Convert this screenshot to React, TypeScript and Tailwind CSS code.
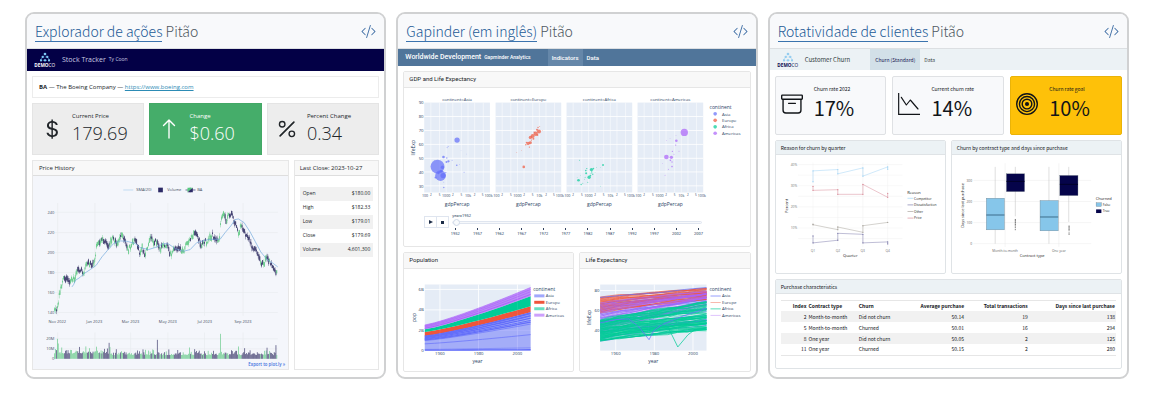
import { useState, type ReactNode } from "react";
import { BsArchive, BsArrowUp, BsBullseye, BsCodeSlash, BsCurrencyDollar, BsPercent } from "react-icons/bs";

type Point = [number, number];

function createRandom(seed: number) {
  let s = seed;
  return () => {
    s = (s * 16807) % 2147483647;
    return s / 2147483647;
  };
}

function sample(points: Point[], x: number) {
  for (let i = 1; i < points.length; i++) {
    const [x0, y0] = points[i - 1];
    const [x1, y1] = points[i];
    if (x <= x1) return y0 + ((y1 - y0) * (x - x0)) / (x1 - x0);
  }
  return points[points.length - 1][1];
}

const toPoints = (points: Point[]) => points.map((p) => p.join(",")).join(" ");

/* ---------- Shared pieces ---------- */

function ShowcaseCard({ title, children }: { title: string; children: ReactNode }) {
  return (
    <article className="flex min-w-0 flex-col overflow-hidden rounded-[9px] border-2 border-[#d0d1d2] bg-white">
      <header className="flex h-[35px] items-center justify-between border-b border-[#dcdfe2] bg-[#f8f9fb] px-2 font-['Noto_Sans_CJK_SC',sans-serif]">
        <h2 className="text-[14px] leading-[16px] font-light whitespace-nowrap text-[#4d5761]">
          <a href="#" className="border-b border-[#3b73ae] text-[#235a96]">
            {title}
          </a>{" "}
          Pitão
        </h2>
        <a href="#" aria-label={`Código: ${title}`} className="text-[#3f6ea5]">
          <BsCodeSlash className="size-[15px]" />
        </a>
      </header>
      {children}
    </article>
  );
}

function DemoLogo({ dark }: { dark?: boolean }) {
  return (
    <svg viewBox="0 0 66 48" className="h-4 w-[22px] shrink-0" aria-label="DEMOCO">
      <g stroke={dark ? "#5aa9dc" : "#a8d4ee"} strokeWidth="2" fill="none">
        <path d="M33 6 18 25M33 6 48 25M26 15H40M18 25H48" strokeDasharray="5 3" />
      </g>
      <g fill={dark ? "#7cc6f2" : "#94cdf0"}>
        <circle cx="33" cy="6" r="4" />
        <circle cx="26" cy="15" r="3.5" />
        <circle cx="40" cy="15" r="3.5" />
        <rect x="18" y="22" width="6" height="6" />
        <rect x="30" y="22" width="6" height="6" />
        <rect x="42" y="22" width="6" height="6" />
      </g>
      <text x="1" y="45" fontSize="14" fontFamily="Open Sans, sans-serif" fill={dark ? "#ffffff" : "#0a0a4f"}>
        <tspan fontWeight="700">DEMO</tspan>
        <tspan fontWeight="400">CO</tspan>
      </text>
    </svg>
  );
}

/* ---------- Stock tracker ---------- */

const PRICE: Point[] = [
  [103, 468], [112, 460], [116, 420], [124, 395], [130, 362], [140, 372], [148, 378], [156, 370], [162, 375],
  [170, 350], [180, 345], [190, 350], [200, 325], [208, 328], [215, 325], [222, 328], [230, 265], [240, 255],
  [250, 255], [258, 268], [265, 275], [272, 260], [280, 248], [288, 265], [295, 255], [305, 240], [315, 262],
  [325, 288], [335, 260], [345, 255], [352, 268], [358, 300], [366, 275], [373, 300], [380, 280], [390, 248],
  [400, 258], [410, 262], [418, 285], [428, 270], [440, 268], [450, 300], [460, 285], [470, 278], [480, 285],
  [492, 285], [500, 265], [510, 250], [518, 240], [526, 228], [535, 250], [542, 275], [552, 262], [560, 258],
  [570, 245], [578, 240], [590, 258], [598, 250], [604, 185], [612, 180], [620, 200], [628, 175], [636, 180],
  [643, 200], [650, 215], [656, 240], [663, 205], [672, 225], [682, 245], [692, 265], [702, 280], [710, 295],
  [720, 318], [730, 330], [740, 305], [750, 320], [760, 345], [768, 352], [773, 346],
];

const AVERAGE: Point[] = [
  [155, 395], [160, 388], [166, 375], [180, 366], [190, 356], [210, 343], [228, 330], [245, 305], [262, 285],
  [280, 265], [300, 257], [320, 258], [345, 265], [360, 277], [385, 283], [410, 275], [430, 265], [445, 266],
  [465, 280], [490, 288], [510, 283], [530, 262], [550, 256], [570, 252], [600, 252], [615, 232], [632, 212],
  [645, 193], [655, 191], [672, 202], [690, 230], [705, 258], [722, 290], [740, 312], [760, 325], [773, 335],
];

const SPIKES: Record<number, number> = { 3: 60, 4: 46, 8: 34, 61: 48, 115: 57, 151: 34, 186: 75, 206: 37, 248: 41 };

function StockChart() {
  const random = createRandom(77);
  const days = Array.from({ length: 250 }, (_, i) => {
    const x = 103 + i * 2.68;
    const mid = sample(PRICE, x);
    const slope = sample(PRICE, x + 3) - sample(PRICE, x - 3);
    const up = slope + (random() - 0.5) * 26 < 0;
    return {
      x,
      up,
      mid: mid + (random() - 0.5) * 14,
      body: 5 + random() * 11,
      wick: 9 + random() * 17,
      volume: SPIKES[i] ?? 11 + random() * random() * 25 + (i < 60 ? 5 : 0),
    };
  });
  return (
    <svg viewBox="38 62 765 574" className="block h-auto w-full" fontFamily="Open Sans, sans-serif" aria-label="Price history">
      <g stroke="#e8ebef" strokeWidth="2">
        {[112, 224, 331, 443, 553, 669].map((x) => (
          <path key={x} d={`M${x} 143V482M${x} 532V611`} />
        ))}
        {[171, 232, 292, 352, 412, 472, 551, 581].map((y) => (
          <path key={y} d={`M103 ${y}H773`} />
        ))}
      </g>
      <path d="M309 104H339" stroke="#a9cfee" strokeWidth="2" />
      <rect x="414" y="97" width="14" height="14" fill="#2c2a66" />
      <path d="M496 104H526M510 97V111" stroke="#2c2a66" strokeWidth="2" />
      <path d="M502 97H518L502 111Z" fill="#55c97f" />
      <path d="M518 97V111H502Z" fill="#2c2a66" />
      <g fontSize="12" fill="#444f5f">
        <text x="348" y="108">SMA(20)</text>
        <text x="441" y="108">Volume</text>
        <text x="531" y="108">BA</text>
        {[240, 220, 200, 180, 160, 140].map((v, i) => (
          <text key={v} x="102" y={176 + i * 60} textAnchor="end">
            {v}
          </text>
        ))}
        <text x="102" y="556" textAnchor="end">20M</text>
        <text x="102" y="585" textAnchor="end">10M</text>
        <text x="102" y="615" textAnchor="end">0</text>
        {["Nov 2022", "Jan 2023", "Mar 2023", "May 2023", "Jul 2023", "Sep 2023"].map((m, i) => (
          <text key={m} x={[111, 222, 331, 443, 554, 669][i]} y="505" textAnchor="middle">
            {m}
          </text>
        ))}
      </g>
      {days.map((d, i) => (
        <g key={i} fill={d.up ? "#4cc274" : "#1b1852"}>
          <rect x={d.x - 0.5} y={d.mid - d.wick / 2} width="1" height={d.wick} />
          <rect x={d.x - 1} y={d.mid - d.body / 2} width="2" height={d.body} />
          <rect x={d.x - 1} y={611 - d.volume} width="2" height={d.volume} opacity="0.85" />
        </g>
      ))}
      <polyline points={toPoints(AVERAGE)} fill="none" stroke="#6fa8dc" strokeWidth="2" />
      <a href="#">
        <text x="795" y="632" fontSize="13" fontWeight="600" textAnchor="end" fill="#3b6fe0">
          Export to plot.ly »
        </text>
      </a>
    </svg>
  );
}

function ValueBox({ icon, label, value, green }: { icon: ReactNode; label: string; value: string; green?: boolean }) {
  return (
    <div
      className={
        green
          ? "grid grid-cols-[39px_1fr] border border-[#43a866] bg-[#45ad6a] text-white"
          : "grid grid-cols-[39px_1fr] border border-[#e4e4e4] bg-[#ededed] text-[#212529]"
      }
    >
      <div className="flex items-center pl-2">{icon}</div>
      <div className="pt-[7px]">
        <div className="text-[6px] leading-[10px]">{label}</div>
        <div className="text-[18px] leading-6 font-light">{value}</div>
      </div>
    </div>
  );
}

function StockTracker() {
  const rows = [
    ["Open", "$180.00"],
    ["High", "$182.33"],
    ["Low", "$179.01"],
    ["Close", "$179.69"],
    ["Volume", "4,601,300"],
  ];
  return (
    <div className="flex flex-1 flex-col font-['Open_Sans',sans-serif] text-[#212529]">
      <div className="flex h-[22px] items-center bg-[#030046] pl-[7px] text-[#c9cbe0]">
        <DemoLogo dark />
        <span className="ml-1.5 text-[7px]">Stock Tracker</span>
        <span className="ml-[3px] text-[5px]">Ty Coon</span>
      </div>
      <div className="flex flex-1 flex-col gap-[5px] px-[5px] pt-[5px] pb-[7px]">
        <p className="h-[22px] border border-[#ececec] px-1.5 text-[6px] leading-5 whitespace-nowrap">
          <b>BA</b> — The Boeing Company —{" "}
          <a href="#" className="text-[#2c8bb5] underline">
            https://www.boeing.com
          </a>
        </p>
        <div className="grid h-[52px] grid-cols-3 gap-[5px]">
          <ValueBox icon={<BsCurrencyDollar className="size-[22px]" />} label="Current Price" value="179.69" />
          <ValueBox icon={<BsArrowUp className="size-[22px]" />} label="Change" value="$0.60" green />
          <ValueBox icon={<BsPercent className="size-[22px]" />} label="Percent Change" value="0.34" />
        </div>
        <div className="grid flex-1 grid-cols-[3fr_1fr] gap-[5px]">
          <section className="border border-[#e7e7e7] bg-[#f4f6fb]">
            <h3 className="h-[15px] border-b border-[#dedede] bg-[#f8f8f8] px-1.5 text-[6px] leading-[14px]">Price History</h3>
            <StockChart />
          </section>
          <section className="border border-[#e7e7e7]">
            <h3 className="h-[15px] border-b border-[#dedede] bg-[#f8f8f8] px-[5px] text-[6px] leading-[14px] whitespace-nowrap">
              Last Close: 2023-10-27
            </h3>
            <div className="px-[5px] pt-[11px]">
              <table className="w-full text-[5px]">
                <tbody>
                  {rows.map(([name, value]) => (
                    <tr key={name} className="h-[14px] odd:bg-[#f1f1f1]">
                      <th scope="row" className="pl-[3px] text-left font-normal">
                        {name}
                      </th>
                      <td className="pr-[3px] text-right">{value}</td>
                    </tr>
                  ))}
                </tbody>
              </table>
            </div>
          </section>
        </div>
      </div>
    </div>
  );
}

/* ---------- Worldwide development ---------- */

const COLORS = { Asia: "#636efa", Europe: "#ef553b", Africa: "#00cc96", Americas: "#ab63fa" };
type Continent = keyof typeof COLORS;
const CONTINENTS = Object.keys(COLORS) as Continent[];
const PANEL_X = [85, 300, 514, 728];

const BUBBLES: Record<Continent, [number, number, number][]> = {
  Asia: [
    [125, 230, 21], [134, 257, 16], [184, 150, 8], [142, 257, 8], [140, 232, 5], [143, 201, 4], [157, 169, 1.5],
    [154, 173, 1.5], [152, 216, 3], [158, 214, 3.5], [169, 211, 1.5], [183, 226, 2.5], [191, 223, 1], [205, 247, 1.5],
    [144, 293, 2], [144, 277, 1], [153, 204, 2], [119, 263, 3], [115, 212, 1], [196, 181, 0.7], [212, 192, 0.7],
    [150, 248, 2], [136, 244, 4], [128, 250, 3],
  ],
  Europe: [
    [385, 231, 4], [405, 142, 5], [412, 138, 6], [421, 131, 6.5], [431, 124, 6], [398, 160, 5], [405, 158, 4.5],
    [391, 164, 2], [402, 171, 2], [428, 112, 2], [433, 109, 1.5], [442, 122, 1], [414, 146, 3], [425, 119, 3],
    [426, 135, 3], [364, 187, 1.2], [379, 181, 1], [393, 157, 2], [416, 126, 2], [408, 150, 2],
  ],
  Africa: [
    [550, 271, 4], [582, 262, 5], [589, 239, 5], [572, 242, 2.5], [573, 250, 3], [624, 225, 3], [595, 236, 2.5],
    [558, 284, 2], [563, 280, 1.5], [553, 211, 1.5], [605, 233, 1.2], [593, 253, 2], [586, 257, 2.5], [617, 289, 1],
    [575, 236, 2], [570, 262, 1.5], [578, 277, 1.5], [546, 262, 1], [600, 247, 1], [588, 250, 1.5], [617, 232, 1],
    [568, 268, 1.2], [590, 246, 2], [556, 256, 1],
  ],
  Americas: [
    [869, 127, 11], [815, 201, 7], [830, 202, 5], [845, 152, 4], [843, 165, 2], [832, 230, 2.5], [833, 184, 2],
    [853, 184, 1.5], [821, 238, 1.5], [811, 256, 1.5], [826, 146, 1], [815, 151, 1], [844, 136, 1], [827, 211, 2.5],
    [832, 216, 2], [803, 220, 1], [838, 193, 1.5],
  ],
};

function GdpChart() {
  return (
    <svg viewBox="24 -7 1041 366" className="block h-auto w-full" fontFamily="Open Sans, sans-serif" aria-label="GDP and life expectancy by continent">
      {CONTINENTS.map((name, i) => {
        const x = PANEL_X[i];
        return (
          <g key={name}>
            <rect x={x} y="37" width="198" height="271" fill="#e5ecf6" />
            <g stroke="#ffffff" strokeWidth="1.5">
              {[20, 46, 66, 86, 112, 132, 152, 178].map((d) => (
                <path key={d} d={`M${x + d} 37V308`} />
              ))}
              {[79, 121, 163, 205, 246, 288].map((y) => (
                <path key={y} d={`M${x} ${y}H${x + 198}`} strokeWidth="2.5" />
              ))}
            </g>
            <g fill={COLORS[name]} fillOpacity="0.7">
              {BUBBLES[name].map(([cx, cy, r], k) => (
                <circle key={k} cx={cx} cy={cy} r={r} />
              ))}
            </g>
            <g textAnchor="middle" fill="#2a3f5f">
              <text x={x + 99} y="33" fontSize="13">
                continent={name}
              </text>
              <text x={x + 99} y="349" fontSize="15">
                gdpPercap
              </text>
              <g fontSize="11">
                <text x={x - 7} y="322" textAnchor="start">100</text>
                <text x={x + 66} y="322">1000</text>
                <text x={x + 132} y="322">10k</text>
                <text x={x + 206} y="322" textAnchor="end">100k</text>
              </g>
              <g fontSize="9">
                {[20, 46, 86, 112, 152, 176].map((d, k) => (
                  <text key={d} x={x + d} y="319">
                    {k % 2 ? 5 : 2}
                  </text>
                ))}
              </g>
            </g>
          </g>
        );
      })}
      <g fontSize="13" fill="#2a3f5f" textAnchor="end">
        {[90, 80, 70, 60, 50, 40, 30].map((v, i) => (
          <text key={v} x="83" y={42 + i * 42}>
            {v}
          </text>
        ))}
      </g>
      <text transform="translate(58 173) rotate(-90)" fontSize="15" textAnchor="middle" fill="#2a3f5f">
        lifeExp
      </text>
      <text x="945" y="56" fontSize="15" fill="#2a3f5f">continent</text>
      {CONTINENTS.map((name, i) => (
        <g key={name}>
          <circle cx="962" cy={71 + i * 19.5} r="5.5" fill={COLORS[name]} fillOpacity="0.7" />
          <text x="983" y={76 + i * 19.5} fontSize="13" fill="#2a3f5f">
            {name}
          </text>
        </g>
      ))}
    </svg>
  );
}

function YearControls() {
  const [year, setYear] = useState(1952);
  const years = Array.from({ length: 12 }, (_, i) => 1952 + i * 5);
  return (
    <div className="flex h-[37px] pr-[48px] pl-5 text-[#2a3f5f]">
      <div className="mt-[7px] flex h-3">
        <button type="button" aria-label="Play" className="flex w-[13px] items-center justify-center border border-[#dfe5ef]">
          <svg viewBox="0 0 4 4" className="size-[4px]">
            <path d="M0 0 4 2 0 4Z" fill="#1c2c47" />
          </svg>
        </button>
        <button type="button" aria-label="Stop" className="-ml-px flex w-[13px] items-center justify-center border border-[#dfe5ef]">
          <svg viewBox="0 0 4 4" className="size-[3px]">
            <path d="M0 0H4V4H0Z" fill="#1c2c47" />
          </svg>
        </button>
      </div>
      <div className="ml-[3px] flex min-w-0 flex-1 flex-col">
        <label htmlFor="year" className="mt-[4px] h-[6px] text-[4px] leading-[6px]">
          year={year}
        </label>
        <input
          id="year"
          type="range"
          min={1952}
          max={2007}
          step={5}
          value={year}
          onChange={(e) => setYear(Number(e.target.value))}
          className="m-0 h-[7px] w-full appearance-none bg-transparent [&::-webkit-slider-runnable-track]:h-[3px] [&::-webkit-slider-runnable-track]:rounded-full [&::-webkit-slider-runnable-track]:border [&::-webkit-slider-runnable-track]:border-[#dfe5ef] [&::-webkit-slider-runnable-track]:bg-[#f6f8fb] [&::-webkit-slider-thumb]:-mt-[3px] [&::-webkit-slider-thumb]:size-[7px] [&::-webkit-slider-thumb]:appearance-none [&::-webkit-slider-thumb]:rounded-full [&::-webkit-slider-thumb]:border [&::-webkit-slider-thumb]:border-[#cfd9e8] [&::-webkit-slider-thumb]:bg-[#f8fafc]"
        />
        <div className="mt-[2px] flex justify-between px-[3px]">
          {years.map((y) => (
            <span key={y} className="flex w-0 flex-col items-center text-[4px] leading-[8px]">
              <i className="h-[2px] w-px shrink-0 bg-[#33435e]" />
              {y}
            </span>
          ))}
        </div>
      </div>
    </div>
  );
}

function curve(x0: number, x1: number, y0: number, y1: number, bend: number): Point[] {
  return Array.from({ length: 12 }, (_, i) => {
    const t = i / 11;
    return [x0 + (x1 - x0) * t, y0 + (y1 - y0) * Math.pow(t, bend)] as Point;
  });
}

function ContinentLegend({ x, thick, opacity }: { x: number; thick: boolean; opacity: number[] }) {
  return (
    <g fill="#2a3f5f">
      <text x={x} y="137" fontSize="15">continent</text>
      {CONTINENTS.map((name, i) => (
        <g key={name}>
          <rect
            x={x + 3}
            y={thick ? 148 + i * 19.5 : 151.5 + i * 19.5}
            width="31"
            height={thick ? 9 : 2.5}
            fill={COLORS[name]}
            opacity={opacity[i]}
          />
          <text x={x + 38} y={157 + i * 19.5} fontSize="13">
            {name}
          </text>
        </g>
      ))}
    </g>
  );
}

function PopulationChart() {
  const bands: [Continent, number, number, number, number, number][] = [
    ["Asia", 318, 318, 275, 202, 0.5],
    ["Europe", 275, 202, 262, 184, 1],
    ["Africa", 262, 184, 254, 154, 1],
    ["Americas", 254, 154, 241, 127, 0.7],
  ];
  const lines: [number, number, Continent, number][] = [
    [317, 316, "Asia", 4], [315, 310, "Asia", 1.5], [298, 270, "Asia", 2], [288, 238, "Asia", 2], [286, 232, "Asia", 4],
    [284, 227, "Asia", 3], [282, 220, "Asia", 4], [279, 213, "Asia", 5], [276, 205, "Asia", 6], [251, 148, "Americas", 3],
    [247, 140, "Americas", 2], [244, 133, "Americas", 2], [241, 127, "Americas", 2],
  ];
  return (
    <svg viewBox="24 71 513 306" className="block h-auto w-full" fontFamily="Open Sans, sans-serif" aria-label="Population">
      <rect x="87" y="118" width="321" height="200" fill="#e5ecf6" />
      <path d="M87 133H408M87 195H408M87 257H408M133 118V318M250 118V318M368 118V318" stroke="#fff" strokeWidth="2.5" />
      {bands.map(([name, b0, b1, t0, t1, opacity]) => (
        <polygon
          key={name}
          points={toPoints([...curve(87, 408, t0, t1, 1.18), ...curve(87, 408, b0, b1, 1.18).reverse()])}
          fill={COLORS[name]}
          fillOpacity={opacity}
        />
      ))}
      {lines.map(([y0, y1, name, width], i) => (
        <polyline key={i} points={toPoints(curve(87, 408, y0, y1, 1.18))} fill="none" stroke={COLORS[name]} strokeWidth={width} />
      ))}
      <path d="M133 118V318M250 118V318M368 118V318" stroke="#fff" strokeWidth="1.5" opacity="0.15" />
      <g fontSize="13" fill="#2a3f5f">
        {["6B", "4B", "2B", "0"].map((v, i) => (
          <text key={v} x="84" y={138 + i * 61.5} textAnchor="end">
            {v}
          </text>
        ))}
        {["1960", "1980", "2000"].map((v, i) => (
          <text key={v} x={133 + i * 117.5} y="331" textAnchor="middle">
            {v}
          </text>
        ))}
      </g>
      <g fontSize="15" fill="#2a3f5f" textAnchor="middle">
        <text x="247" y="356">year</text>
        <text transform="translate(59 218) rotate(-90)">pop</text>
      </g>
      <ContinentLegend x={416} thick opacity={[0.6, 1, 0.6, 0.6]} />
    </svg>
  );
}

function LifeChart() {
  const random = createRandom(4242);
  const specs: [Continent, number, number, number, number, number][] = [
    ["Asia", 28, 291, 175, 250, 130],
    ["Europe", 28, 205, 155, 162, 130],
    ["Americas", 24, 268, 172, 178, 138],
    ["Africa", 62, 290, 225, 258, 172],
  ];
  const lines = specs.flatMap(([name, count, low0, high0, low1, high1]) =>
    Array.from({ length: count }, (_, k) => {
      const t = (k + 0.5) / count;
      const t1 = Math.min(1, Math.max(0, t + (random() - 0.5) * 0.4));
      const base = curve(614, 936, low0 + (high0 - low0) * t, low1 + (high1 - low1) * t1, 0.85);
      const wobble = name === "Africa" ? 6 : 3;
      return { name, points: base.map(([x, y], i) => [x, i === 0 ? y : y + (random() - 0.5) * wobble] as Point) };
    }),
  );
  return (
    <svg viewBox="553 71 512 306" className="block h-auto w-full" fontFamily="Open Sans, sans-serif" aria-label="Life expectancy">
      <rect x="614" y="118" width="322" height="200" fill="#e5ecf6" />
      <path d="M614 136H936M614 197H936M614 258H936M661 118V318M778 118V318M895 118V318" stroke="#fff" strokeWidth="2.5" />
      <g fill="none" strokeWidth="2.2">
        {lines.map(({ name, points }, i) => (
          <polyline key={i} points={toPoints(points)} stroke={COLORS[name]} strokeOpacity="0.9" />
        ))}
        <polyline points="614,234 661,224 700,222 731,246 762,285 776,258 800,240 860,215 936,190" stroke={COLORS.Asia} />
        <polyline points="614,262 700,246 790,235 820,248 849,307 880,270 900,255 936,250" stroke={COLORS.Africa} />
        <polyline points="614,157 700,149 800,142 870,133 936,127" stroke={COLORS.Asia} />
      </g>
      <g fontSize="13" fill="#2a3f5f">
        {["80", "60", "40"].map((v, i) => (
          <text key={v} x="612" y={141 + i * 61} textAnchor="end">
            {v}
          </text>
        ))}
        {["1960", "1980", "2000"].map((v, i) => (
          <text key={v} x={661 + i * 117} y="331" textAnchor="middle">
            {v}
          </text>
        ))}
      </g>
      <g fontSize="15" fill="#2a3f5f" textAnchor="middle">
        <text x="775" y="356">year</text>
        <text transform="translate(586 218) rotate(-90)">lifeExp</text>
      </g>
      <ContinentLegend x={945} thick={false} opacity={[0.8, 0.5, 0.8, 0.45]} />
    </svg>
  );
}

function GapPanel({ title, children }: { title: string; children: ReactNode }) {
  return (
    <section className="min-w-0 overflow-hidden rounded-[2px] border border-[#e6e6e6]">
      <h3 className="h-4 border-b border-[#e6e6e6] bg-[#f8f8f8] px-[5px] text-[6px] leading-[14px]">{title}</h3>
      {children}
    </section>
  );
}

function WorldwideDevelopment() {
  return (
    <div className="flex flex-1 flex-col font-[Roboto,sans-serif] text-[#212529]">
      <nav className="flex h-[17px] items-center bg-[#50759a] pl-[7px] font-medium whitespace-nowrap text-white">
        <span className="text-[7px]">Worldwide Development</span>
        <span className="ml-[3px] text-[5px]">Gapminder Analytics</span>
        <a href="#" className="ml-[17px] flex h-full items-center bg-[#6587a9] px-1 text-[6px]">
          Indicators
        </a>
        <a href="#" className="ml-1 text-[6px]">
          Data
        </a>
      </nav>
      <div className="flex flex-1 flex-col gap-[5px] px-[5px] pt-[5px] pb-[5px]">
        <GapPanel title="GDP and Life Expectancy">
          <GdpChart />
          <YearControls />
        </GapPanel>
        <div className="grid flex-1 grid-cols-2 gap-[5px]">
          <GapPanel title="Population">
            <PopulationChart />
          </GapPanel>
          <GapPanel title="Life Expectancy">
            <LifeChart />
          </GapPanel>
        </div>
      </div>
    </div>
  );
}

/* ---------- Customer churn ---------- */

const REASONS: { name: string; color: string; points: Point[] }[] = [
  { name: "Competitor", color: "#9fd3f5", points: [[149, 140], [149, 107], [224, 103], [224, 116], [300, 98], [300, 123], [375, 95], [375, 102]] },
  { name: "Dissatisfaction", color: "#7d7bab", points: [[149, 304], [149, 325], [224, 317], [224, 296], [300, 299], [300, 325], [375, 322], [375, 328]] },
  { name: "Other", color: "#a8a39c", points: [[149, 268], [149, 270], [224, 285], [224, 277], [300, 293], [300, 273], [375, 263]] },
  { name: "Price", color: "#d98b98", points: [[149, 154], [149, 166], [224, 164], [224, 178], [300, 178], [300, 148], [375, 187], [375, 175]] },
];

function ReasonChart() {
  return (
    <svg viewBox="37 59 512 356" className="block h-auto w-full" fontFamily="Open Sans, sans-serif" aria-label="Reason for churn by quarter">
      <g stroke="#f1f1f1" strokeWidth="1.5">
        {[88, 120, 152, 184, 216, 248, 280, 312].map((y) => (
          <path key={y} d={`M104 ${y}H420`} />
        ))}
        {[149, 224, 300, 375].map((x) => (
          <path key={x} d={`M${x} 82V338`} />
        ))}
      </g>
      {REASONS.map(({ name, color, points }, i) => (
        <g key={name}>
          <polyline points={toPoints(points)} fill="none" stroke={color} strokeWidth="1.5" />
          {points.map(([x, y], k) => (
            <circle key={k} cx={x} cy={y} r="2" fill={color} />
          ))}
          <path d={`M435 ${190 + i * 20}H453`} stroke={color} strokeWidth="2" />
          <text x="455" y={194 + i * 20} fontSize="10" fill="#222222">
            {name}
          </text>
        </g>
      ))}
      <g fontSize="10" fill="#777777">
        {["40%", "30%", "20%", "10%"].map((v, i) => (
          <text key={v} x="101" y={92 + i * 64} textAnchor="end">
            {v}
          </text>
        ))}
        {["Q1", "Q2", "Q3", "Q4"].map((v, i) => (
          <text key={v} x={149 + i * 75.3} y="353" textAnchor="middle">
            {v}
          </text>
        ))}
      </g>
      <g fontSize="12" fill="#222222">
        <text x="434" y="177">Reason</text>
        <text x="262" y="369" textAnchor="middle">Quarter</text>
        <text transform="translate(73 213) rotate(-90)" textAnchor="middle">Percent</text>
      </g>
    </svg>
  );
}

function ContractChart() {
  const boxes = [
    { x: 670, top: 190, median: 241, bottom: 286, low: 328, fill: "#86c6ea", line: "#2d5b77" },
    { x: 731, top: 116, median: 139, bottom: 170, low: 245, fill: "#05044a", line: "#000022" },
    { x: 833, top: 197, median: 247, bottom: 289, low: 328, fill: "#86c6ea", line: "#2d5b77" },
    { x: 893, top: 121, median: 148, bottom: 182, low: 262, fill: "#05044a", line: "#000022" },
  ];
  return (
    <svg viewBox="566 59 513 356" className="block h-auto w-full" fontFamily="Open Sans, sans-serif" aria-label="Churn by contract type">
      <g stroke="#eaeaea" strokeWidth="1.5">
        {[136, 200, 264, 328].map((y) => (
          <path key={y} d={`M631 ${y}H988`} />
        ))}
        {[727, 890].map((x) => (
          <path key={x} d={`M${x} 84V338`} />
        ))}
      </g>
      {boxes.map((b) => (
        <g key={b.x}>
          <path d={`M${b.x + 27} 95V${b.low}`} stroke="#bdbdbd" strokeWidth="1.5" />
          <rect x={b.x} y={b.top} width="55" height={b.bottom - b.top} fill={b.fill} stroke="#6a7780" strokeWidth="1" />
          <path d={`M${b.x} ${b.median}H${b.x + 55}`} stroke={b.line} strokeWidth="2.5" />
        </g>
      ))}
      <g stroke="#666666" strokeWidth="3">
        <path d="M758 253V276" strokeDasharray="6 1" />
        <path d="M758 278V288" strokeDasharray="3 3" />
        <path d="M921 273V290" strokeDasharray="7 1" />
        <path d="M921 294V301" strokeDasharray="3 1" />
      </g>
      <g fontSize="10" fill="#666666">
        {["300", "200", "100", "0"].map((v, i) => (
          <text key={v} x="627" y={140 + i * 64} textAnchor="end">
            {v}
          </text>
        ))}
        <text x="727" y="352" textAnchor="middle">Month-to-month</text>
        <text x="890" y="352" textAnchor="middle">One year</text>
      </g>
      <g fill="#222222">
        <text x="809" y="369" fontSize="12" textAnchor="middle">Contract type</text>
        <text transform="translate(601 212) rotate(-90)" fontSize="12" textAnchor="middle">
          Days since last purchase
        </text>
        <text x="1002" y="196" fontSize="12">Churned</text>
        <rect x="1003" y="204" width="16" height="11" fill="#86c6ea" stroke="#6a7780" />
        <rect x="1003" y="224" width="16" height="11" fill="#05044a" />
        <text x="1023" y="213" fontSize="10">False</text>
        <text x="1023" y="233" fontSize="10">True</text>
      </g>
    </svg>
  );
}

function ChurnBox({ icon, label, value, gold }: { icon: ReactNode; label: string; value: string; gold?: boolean }) {
  return (
    <div
      className={
        gold
          ? "grid grid-cols-[38px_1fr] rounded-[2px] border border-[#eab308] bg-[#fec109]"
          : "grid grid-cols-[38px_1fr] rounded-[2px] border border-[#dfe1e4] bg-[#f8f9fb]"
      }
    >
      <div className="flex items-center pb-1 pl-[5px]">{icon}</div>
      <div className="pt-[7px]">
        <div className="text-[5px] leading-[9px] whitespace-nowrap">{label}</div>
        <div className="pt-[3px] text-[20px] leading-6">{value}</div>
      </div>
    </div>
  );
}

function ChurnPanel({ title, children }: { title: string; children: ReactNode }) {
  return (
    <section className="min-w-0 overflow-hidden rounded-[2px] border border-[#dfe3e6]">
      <h3 className="h-[14px] border-b border-[#dfe3e6] bg-[#ecf2f5] px-[5px] text-[5px] leading-[13px] whitespace-nowrap">{title}</h3>
      {children}
    </section>
  );
}

function CustomerChurn() {
  const rows = [
    ["2", "Month-to-month", "Did not churn", "50.14", "19", "138"],
    ["5", "Month-to-month", "Churned", "50.01", "16", "294"],
    ["8", "One year", "Did not churn", "50.05", "2", "125"],
    ["11", "One year", "Churned", "50.15", "2", "280"],
  ];
  const head = ["Index", "Contract type", "Churn", "Average purchase", "Total transactions", "Days since last purchase"];
  const isText = (i: number) => i === 1 || i === 2;
  return (
    <div className="flex flex-1 flex-col font-['Noto_Sans_CJK_SC',sans-serif] text-[#111418]">
      <nav className="flex h-[21px] items-center bg-[#ecf2f5] pl-[7px] whitespace-nowrap text-[#333a40]">
        <DemoLogo />
        <span className="ml-1.5 text-[6px]">Customer Churn</span>
        <a href="#" className="ml-5 flex h-full items-center bg-[#d2e0e8] px-[5px] text-[5px] text-[#15154f]">
          Churn (Standard)
        </a>
        <a href="#" className="ml-1 text-[5px]">
          Data
        </a>
      </nav>
      <div className="flex flex-1 flex-col gap-[5px] px-[5px] pt-[6px] pb-[6px]">
        <div className="grid h-[59px] grid-cols-3 gap-[6px]">
          <ChurnBox icon={<BsArchive className="size-[22px]" />} label="Churn rate 2022" value="17%" />
          <ChurnBox
            icon={
              <svg viewBox="0 0 66 66" className="size-[22px]" fill="none" stroke="currentColor" strokeWidth="3.5">
                <path d="M2 0V64H66" />
                <path d="M10 13 25 36 37 21 60 48" strokeLinecap="round" strokeLinejoin="round" />
              </svg>
            }
            label="Current churn rate"
            value="14%"
          />
          <ChurnBox icon={<BsBullseye className="size-[22px]" />} label="Churn rate goal" value="10%" gold />
        </div>
        <div className="grid grid-cols-2 gap-[5px]">
          <ChurnPanel title="Reason for churn by quarter">
            <ReasonChart />
          </ChurnPanel>
          <ChurnPanel title="Churn by contract type and days since purchase">
            <ContractChart />
          </ChurnPanel>
        </div>
        <ChurnPanel title="Purchase characteristics">
          <div className="px-[5px] pt-[6px] pb-3">
            <table className="w-full table-fixed border-y border-[#e6e6e6] text-[5px] leading-[10px]">
              <colgroup>
                <col className="w-[8%]" />
                <col className="w-[15%]" />
                <col className="w-[16%]" />
                <col className="w-[16%]" />
                <col className="w-[19%]" />
                <col className="w-[26%]" />
              </colgroup>
              <thead>
                <tr className="h-[11px]">
                  {head.map((h, i) => (
                    <th
                      key={h}
                      scope="col"
                      className={isText(i) ? "px-px text-left font-bold whitespace-nowrap" : "px-px text-right font-bold whitespace-nowrap"}
                    >
                      {h}
                    </th>
                  ))}
                </tr>
              </thead>
              <tbody>
                {rows.map((row) => (
                  <tr key={row[0]} className="h-[11px] odd:bg-[#f1f1f1]">
                    {row.map((cell, i) => (
                      <td key={i} className={isText(i) ? "px-px text-left" : "px-px text-right"}>
                        {cell}
                      </td>
                    ))}
                  </tr>
                ))}
              </tbody>
            </table>
          </div>
        </ChurnPanel>
      </div>
    </div>
  );
}

export default function App() {
  return (
    <main className="bg-white py-3 pr-[27px] pl-[25px]">
      <div className="grid grid-cols-3 gap-2.5">
        <ShowcaseCard title="Explorador de ações">
          <StockTracker />
        </ShowcaseCard>
        <ShowcaseCard title="Gapinder (em inglês)">
          <WorldwideDevelopment />
        </ShowcaseCard>
        <ShowcaseCard title="Rotatividade de clientes">
          <CustomerChurn />
        </ShowcaseCard>
      </div>
    </main>
  );
}
